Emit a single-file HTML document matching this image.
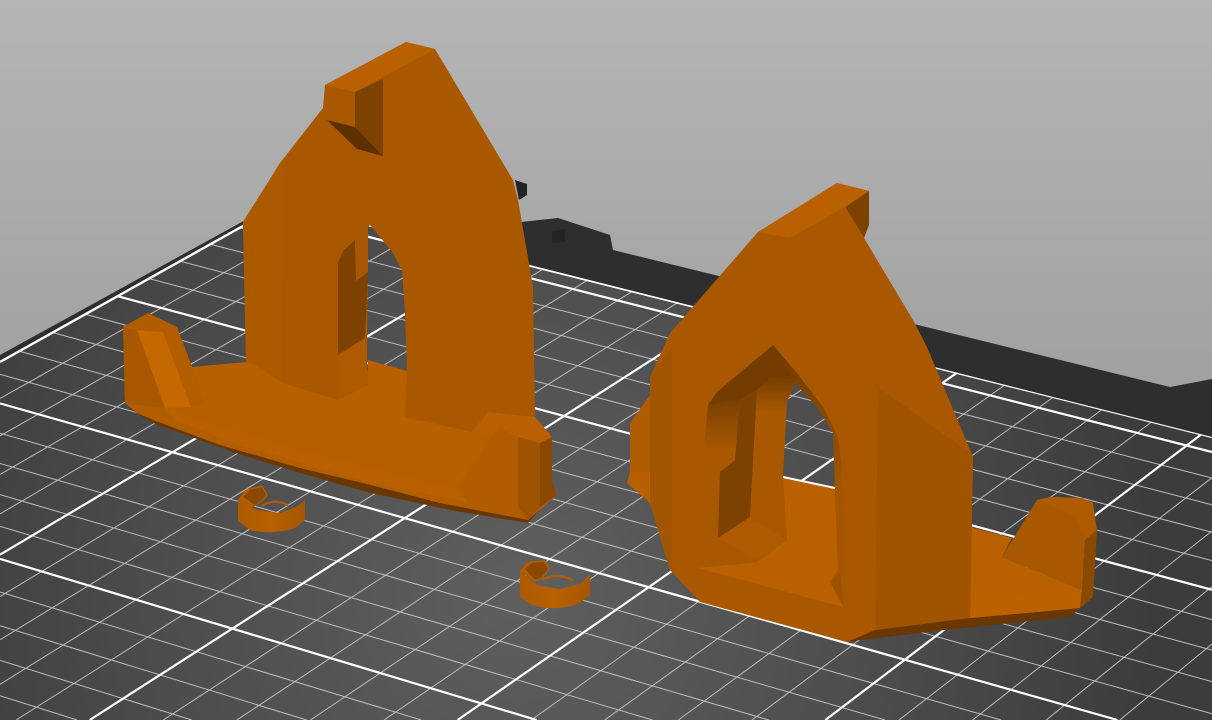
<!DOCTYPE html>
<html lang="en">
<head>
<meta charset="utf-8">
<title>3D print bed preview</title>
<style>
html,body{margin:0;padding:0;width:1212px;height:720px;overflow:hidden;background:#aaa}
svg{display:block}
</style>
</head>
<body>
<svg xmlns="http://www.w3.org/2000/svg" width="1212" height="720" viewBox="0 0 1212 720">
<defs>
<linearGradient id="bg" gradientUnits="userSpaceOnUse" x1="0" y1="0" x2="0" y2="400">
<stop offset="0" stop-color="#b5b5b5"/><stop offset="1" stop-color="#a0a0a0"/>
</linearGradient>
<radialGradient id="bed" gradientUnits="userSpaceOnUse" cx="520" cy="590" r="640">
<stop offset="0" stop-color="#5f5f5f"/><stop offset="0.55" stop-color="#4d4d4d"/><stop offset="1" stop-color="#3c3c3c"/>
</radialGradient>
<linearGradient id="ga" gradientUnits="userSpaceOnUse" x1="0" y1="400" x2="0" y2="450">
<stop offset="0" stop-color="#7a4000"/><stop offset="1" stop-color="#a85800"/>
</linearGradient>
<linearGradient id="gb" gradientUnits="userSpaceOnUse" x1="0" y1="380" x2="0" y2="412">
<stop offset="0" stop-color="#7a4000"/><stop offset="1" stop-color="#a85800"/>
</linearGradient>
<linearGradient id="gc" gradientUnits="userSpaceOnUse" x1="0" y1="345" x2="0" y2="480">
<stop offset="0" stop-color="#703a00"/><stop offset="1" stop-color="#a05400"/>
</linearGradient>
<linearGradient id="r1" gradientUnits="userSpaceOnUse" x1="238" y1="0" x2="305" y2="0">
<stop offset="0" stop-color="#ad5a00"/><stop offset="0.5" stop-color="#b86000"/><stop offset="1" stop-color="#a45600"/>
</linearGradient>
<linearGradient id="r2" gradientUnits="userSpaceOnUse" x1="520" y1="0" x2="590" y2="0">
<stop offset="0" stop-color="#ad5a00"/><stop offset="0.5" stop-color="#b86000"/><stop offset="1" stop-color="#a45600"/>
</linearGradient>
<clipPath id="bc"><polygon points="0,362 284,203 1212,437 1212,720 0,720"/></clipPath>
<clipPath id="hc"><polygon points="795,383 817,407 833,433 835,488 783,477 787,402"/></clipPath>
</defs>

<rect width="1212" height="720" fill="url(#bg)"/>
<polygon fill="#2e2e2e" points="0,355 300,190 521,222 558,218 610,235 613,250 1170,387 1212,379 1212,720 0,720"/>
<polygon fill="#232323" points="515,180 527,184 527,195 519,200"/>
<polygon fill="#242424" points="552,231 565,229 565,242 552,243"/>
<polygon fill="url(#bed)" points="0,362 284,203 1212,437 1212,720 0,720"/>

<g clip-path="url(#bc)">
<g stroke="#bdbdbd" stroke-width="1" fill="none">
<path d="M0 166L1212 478M0 189.5L1212 504.8M0 213.9L1212 532.3M0 239L1212 560.7"/>
<path d="M0 291.1L1212 619.7M0 318.1L1212 650.2M0 345.9L1212 681.6M0 374.3L1212 713.8"/>
<path d="M0 433.2L1001 720M0 463.5L885 720M0 494.6L768.8 720M0 526.4L652.5 720"/>
<path d="M0 592L421.3 720M0 625.7L306.7 720M0 660.3L191.8 720M0 695.7L77.1 720"/>
<path d="M442.4 150L0 398.5M502 150L0 436M561.7 150L0 474.4M621.3 150L0 513.9"/>
<path d="M740.6 150L0 596.6M800.3 150L0 639.8M859.9 150L0 684.3M919.6 150L16.1 720"/>
<path d="M1038.9 150L163.2 720M1098.5 150L236.8 720M1158.2 150L310.4 720M1212 154L384 720"/>
<path d="M1212 238.5L531.1 720M1212 283L604.7 720M1212 329L678.3 720M1212 377L751.9 720"/>
<path d="M1212 477.7L899 720M1212 531L972.6 720M1212 586.6L1046.2 720M1212 644L1119.8 720"/>
</g>
<g stroke="#fff" stroke-width="2.2" fill="none">
<path d="M284 204L1212 437"/>
<path d="M0 142.9L1212 452"/>
<path d="M0 264.7L1212 589.8"/>
<path d="M0 403.4L1117.5 720"/>
<path d="M0 558.9L536.6 720"/>
<path d="M681 150L0 554.7"/>
<path d="M979.2 150L89.7 720"/>
<path d="M1212 195.5L457.6 720"/>
<path d="M1212 426.3L825.4 720"/>
</g>
</g>
<path d="M0 362L284 203" stroke="#fff" stroke-width="2.4" fill="none"/>

<!-- left object -->
<polygon fill="#6a3700" points="127,407 153,420 220,445 300,468 367,484 440,503 520,516 528,512 540,510 528,523 450,510 367,492 300,473 233,452 153,423"/>
<polygon fill="#b25d00" points="123,327 148,313 177,327 192,367 407,371 488,412 552,437 552,480 557,495 528,520 440,503 367,484 300,468 220,445 153,420 137,413 125,403"/>
<polygon fill="#b76000" points="192,367 247,362 252,363 283,383 338,400 368,385 368,360 407,371 405,417 472,432 488,412 493,435 457,488 300,450 165,408 205,403"/>
<polygon fill="#b96100" points="165,408 300,450 457,488 470,503 367,482 233,443 175,420"/>
<polygon fill="#a85800" points="123,327 137,330 165,408 125,403"/>
<polygon fill="#c66800" points="137,330 163,332 191,407 165,408"/>
<polygon fill="#b25d00" points="163,332 177,327 192,367 205,403 191,407"/>
<polygon fill="#b05c00" points="123,327 148,313 177,327 163,332 137,330"/>

<polygon fill="#a95800" points="325,85 406,42 435,49 513,180 518,200 533,287 535,417 488,412 472,432 405,417 407,371 405,313 402,270 393,253 370,225 368,227 367,360 368,385 338,400 283,383 252,363 246,362 243,222 280,163 323,108"/>
<polygon fill="#ac5a00" points="243,222 282,160 283,383 252,363 246,362"/>
<polygon fill="#b96100" points="325,85 406,42 435,49 355,92"/>
<polygon fill="#7d4100" points="355,92 383,79 383,156 355,127"/>
<polygon fill="#5c3000" points="327,120 355,127 383,156 357,149"/>
<polygon fill="#7d4100" points="368,227 355,240 344,250 338,262 338,355 365,338 368,272 356,281 355,240"/>
<polygon fill="#a65700" points="355,240 368,229 368,272 356,281"/>
<polygon fill="#ad5a00" points="338,355 365,338 368,385 338,400"/>

<polygon fill="#b96100" points="475,433 488,412 535,417 552,437 540,443 518,437 500,428 493,435"/>
<polygon fill="#b15c00" points="493,435 500,428 518,437 518,507 528,520 470,505 457,488"/>
<polygon fill="#9e5300" points="518,437 540,443 540,507 528,520 518,507"/>
<polygon fill="#8a4800" points="540,443 552,437 552,480 557,495 540,507"/>

<!-- ring 1 -->
<path d="M238 500L245 490 262 485 268 495 263 501 255 506 250 508Z" fill="#b05c00"/>
<path d="M243 497L250 490 262 487 266 495 262 500 255 505Z" fill="#8a4800"/>
<path d="M262 506Q273 498 288 505" stroke="#b05c00" stroke-width="2.2" fill="none"/>
<path d="M238 500V521L250 530Q262 533 273 532 288 531 295 528L305 520V500L298 506 280 513 257 510Z" fill="url(#r1)"/>

<!-- ring 2 -->
<path d="M520 571L527 562 545 560 550 568 543 578 535 582Z" fill="#b05c00"/>
<path d="M525 569L532 563 544 562 548 569 542 577 535 580Z" fill="#8a4800"/>
<path d="M542 580Q556 572 573 580" stroke="#b05c00" stroke-width="2.2" fill="none"/>
<path d="M520 571V597L532 605Q545 609 557 608 572 607 580 603L590 595V573L582 583 560 589 537 585Z" fill="url(#r2)"/>

<!-- right object -->
<polygon fill="#6a3700" points="847,642 872,629 970,618 1080,608 1093,597 1070,617 953,629 860,640"/>
<polygon fill="#b96000" points="970,527 1012,538 1002,557 1082,590 1080,608 970,618"/>
<polygon fill="#bb6100" points="970,600 1050,590 1082,590 1080,608 970,618"/>
<polygon fill="#a85800" points="1037,500 1050,497 1082,498 1093,503 1097,530 1085,540 1082,590 1002,557"/>
<polygon fill="#ae5b00" points="1037,500 1050,497 1082,498 1093,503 1096,530 1085,540 1077,518"/>
<polygon fill="#8a4900" points="1085,540 1097,530 1093,597 1080,608 1082,590"/>
<polygon fill="#b05c00" points="630,423 650,395 650,503 627,483 630,472"/>
<polygon fill="#b86000" points="627,483 630,472 650,472 650,503"/>

<polygon fill="#7d4100" points="845,207 869,191 869,225 864,238"/>
<polygon fill="#a95800" points="758,232 837,183 869,191 845,207 864,238 913,320 927,347 973,457 973,460 970,618 875,630 847,642 700,602 670,570 650,503 650,377 670,333"/>
<polygon fill="#a25500" points="650,377 672,347 672,570 670,570 650,503"/>
<polygon fill="#a15400" points="878,387 970,453 973,460 970,618 875,630"/>
<polygon fill="#b96100" points="758,232 837,183 869,191 845,207 790,238"/>

<!-- right arch inside -->
<polygon fill="#a65700" points="773,345 820,410 835,433 840,447 838,490 843,607 698,568 702,470 708,405 717,392"/>
<polygon fill="url(#ga)" points="708,405 740,400 735,460 720,472 718,538 757,560 698,568 702,470"/>
<polygon fill="#733c00" points="773,345 797,380 770,378 757,390 740,400 708,405 717,392"/>
<polygon fill="#7d4100" points="740,400 757,390 750,517 718,538 720,472 735,460"/>
<polygon fill="url(#gb)" points="757,390 770,378 797,380 788,398 786,470 782,537 750,517"/>
<polygon fill="#ad5a00" points="750,517 787,540 777,553 757,560 718,538"/>
<polygon fill="#b96000" points="698,568 757,562 787,540 783,477 835,488 838,570 830,582 843,607"/>
<polygon fill="#9c5200" points="830,582 840,573 844,607"/>
<polygon fill="#a55600" points="835,488 838,447 842,470 845,607 840,573 838,570"/>
<polygon fill="url(#gc)" points="773,345 797,373 823,407 838,437 842,470 838,490 835,488 833,433 817,407 795,383"/>
<!-- see-through opening -->
<polygon fill="url(#bed)" points="795,383 817,407 833,433 835,488 783,477 787,402"/>
<g clip-path="url(#hc)">
<g stroke="#bdbdbd" stroke-width="1" fill="none">
<path d="M0 189.5L1212 504.8M0 213.9L1212 532.3M0 239L1212 560.7"/>
<path d="M1158.2 150L310.4 720M1212 154L384 720"/>
</g>
<path d="M1212 195.5L457.6 720" stroke="#fff" stroke-width="2.2" fill="none"/>
</g>
<path d="M783 477L835 488" stroke="#fff" stroke-width="2"/>
</svg>
</body>
</html>
